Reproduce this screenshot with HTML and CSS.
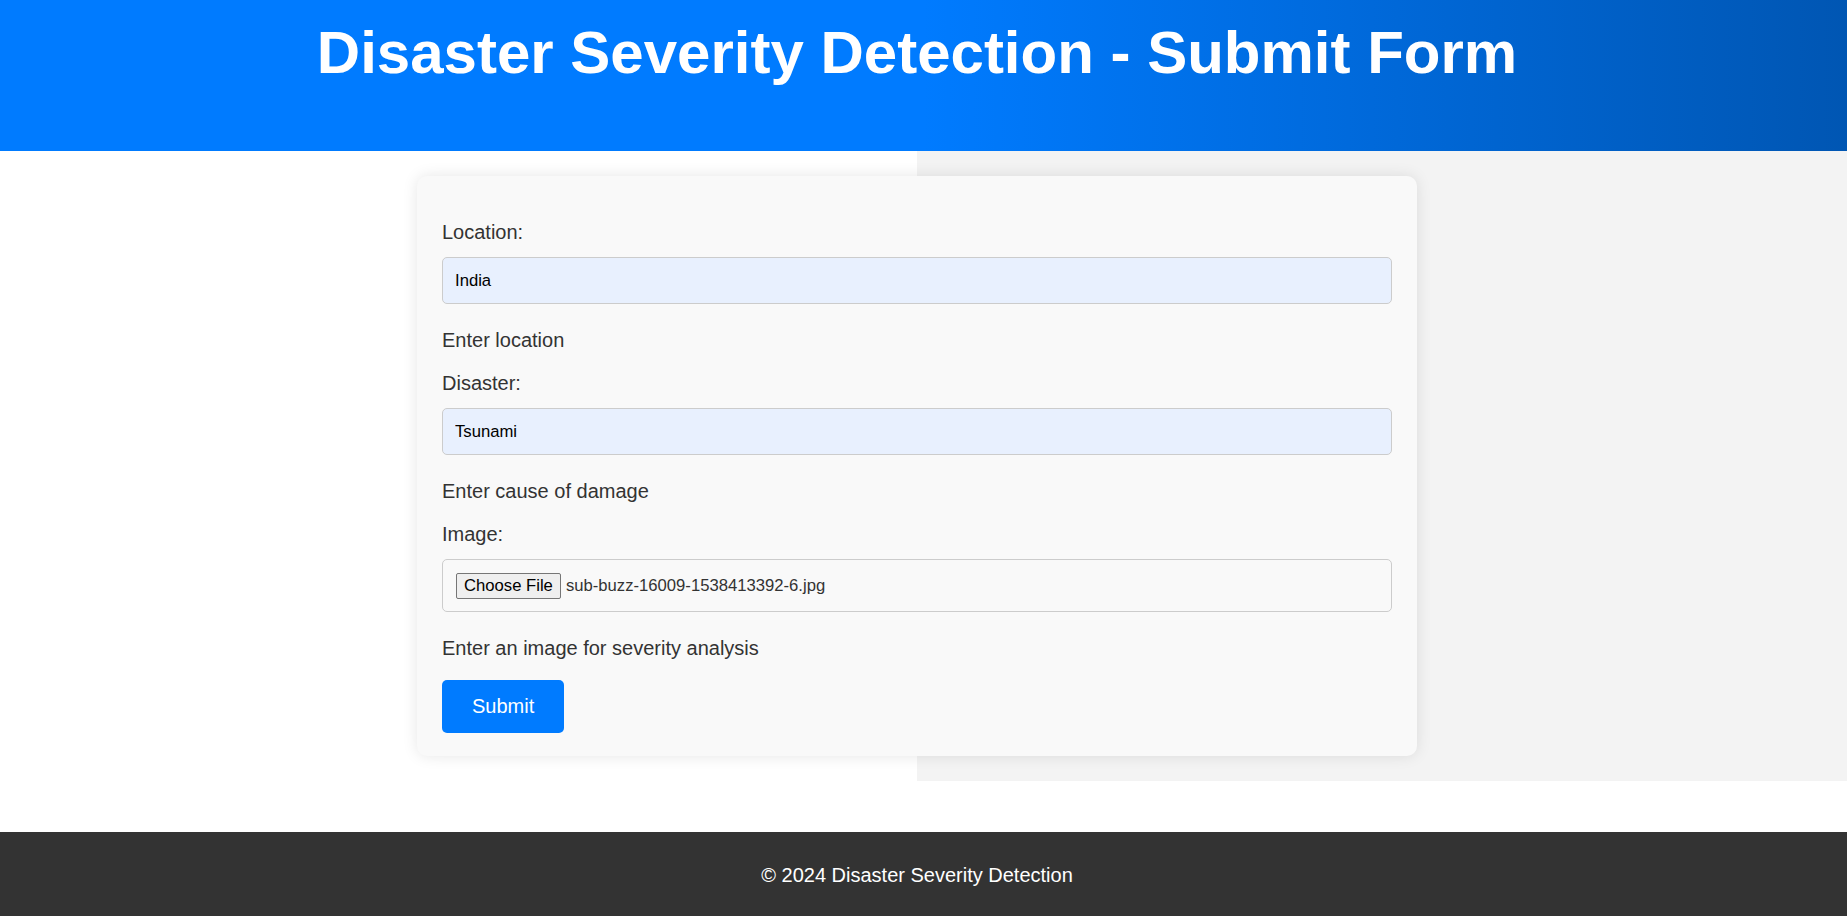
FILE: index.html
```html
<!DOCTYPE html>
<html lang="en">
<head>
<meta charset="utf-8">
<title>Disaster Severity Detection - Submit Form</title>
<link rel="stylesheet" href="styles.css">
</head>
<body>
<header class="site-header">
  <h1 class="site-title">Disaster Severity Detection - Submit Form</h1>
</header>
<main class="main">
  <div class="card">
    <form class="form">
      <label class="label" for="location">Location:</label>
      <input class="text-input" id="location" type="text" value="India">
      <p class="hint">Enter location</p>

      <label class="label" for="disaster">Disaster:</label>
      <input class="text-input" id="disaster" type="text" value="Tsunami">
      <p class="hint">Enter cause of damage</p>

      <label class="label">Image:</label>
      <div class="file-box">
        <span class="file-btn">Choose File</span>
        <span class="file-name">sub-buzz-16009-1538413392-6.jpg</span>
      </div>
      <p class="hint">Enter an image for severity analysis</p>

      <button class="submit" type="button">Submit</button>
    </form>
  </div>
</main>
<footer class="site-footer">
  <p class="footer-text">© 2024 Disaster Severity Detection</p>
</footer>
</body>
</html>
```
FILE: styles.css
```css
* { box-sizing: border-box; }

html, body {
  margin: 0;
  padding: 0;
}

body {
  font-family: "Liberation Sans", Arial, sans-serif;
  color: #333;
  background: #fff;
  min-height: 100vh;
  display: flex;
  flex-direction: column;
}

.site-header {
  background: linear-gradient(90deg, #007bff 50%, #0056b3 100%);
  padding: 18px 13px 64px 0;
  text-align: center;
}

.site-title {
  margin: 0;
  color: #fff;
  font-size: 60px;
  font-weight: bold;
  line-height: 69px;
}

.main {
  background: linear-gradient(90deg, #fff calc(50% - 6.5px), #f3f3f3 calc(50% - 6.5px));
  padding: 25px 13px 25px 0;
}

.card {
  width: 1000px;
  margin: 0 auto;
  background: #f9f9f9;
  border-radius: 10px;
  box-shadow: 0 0 15px rgba(0, 0, 0, 0.1);
  padding: 45px 25px 23px;
}

.form {
  display: flex;
  flex-direction: column;
  align-items: flex-start;
}

.label {
  display: block;
  font-size: 20px;
  line-height: 23px;
  margin-bottom: 13px;
  color: #333;
}

.text-input {
  width: 100%;
  height: 47px;
  padding: 0 12px;
  border: 1px solid #ccc;
  border-radius: 5px;
  background: #e8f0fe;
  color: #000;
  font-family: "Liberation Sans", Arial, sans-serif;
  font-size: 16.67px;
  outline: none;
}

.hint {
  margin: 25px 0 20px;
  font-size: 20px;
  line-height: 23px;
  color: #333;
}

.file-box {
  width: 100%;
  height: 53px;
  border: 1px solid #ccc;
  border-radius: 5px;
  background: #f9f9f9;
  padding: 0 12px 0 13px;
  display: flex;
  align-items: center;
  gap: 5px;
  font-size: 16.67px;
}

.file-btn {
  display: inline-flex;
  align-items: center;
  height: 26px;
  padding: 0 7px;
  background: #efefef;
  border: 1px solid #767676;
  border-radius: 2px;
  color: #000;
  font-size: 16.67px;
}

.file-name {
  color: #333;
}

.submit {
  height: 53px;
  padding: 0 30px;
  background: #007bff;
  color: #fff;
  border: none;
  border-radius: 5px;
  font-family: "Liberation Sans", Arial, sans-serif;
  font-size: 20px;
  cursor: pointer;
}

.site-footer {
  margin-top: auto;
  background: #333;
  color: #fff;
  text-align: center;
  padding: 32px 13px 29px 0;
}

.footer-text {
  margin: 0;
  font-size: 20px;
  line-height: 23px;
}
```
